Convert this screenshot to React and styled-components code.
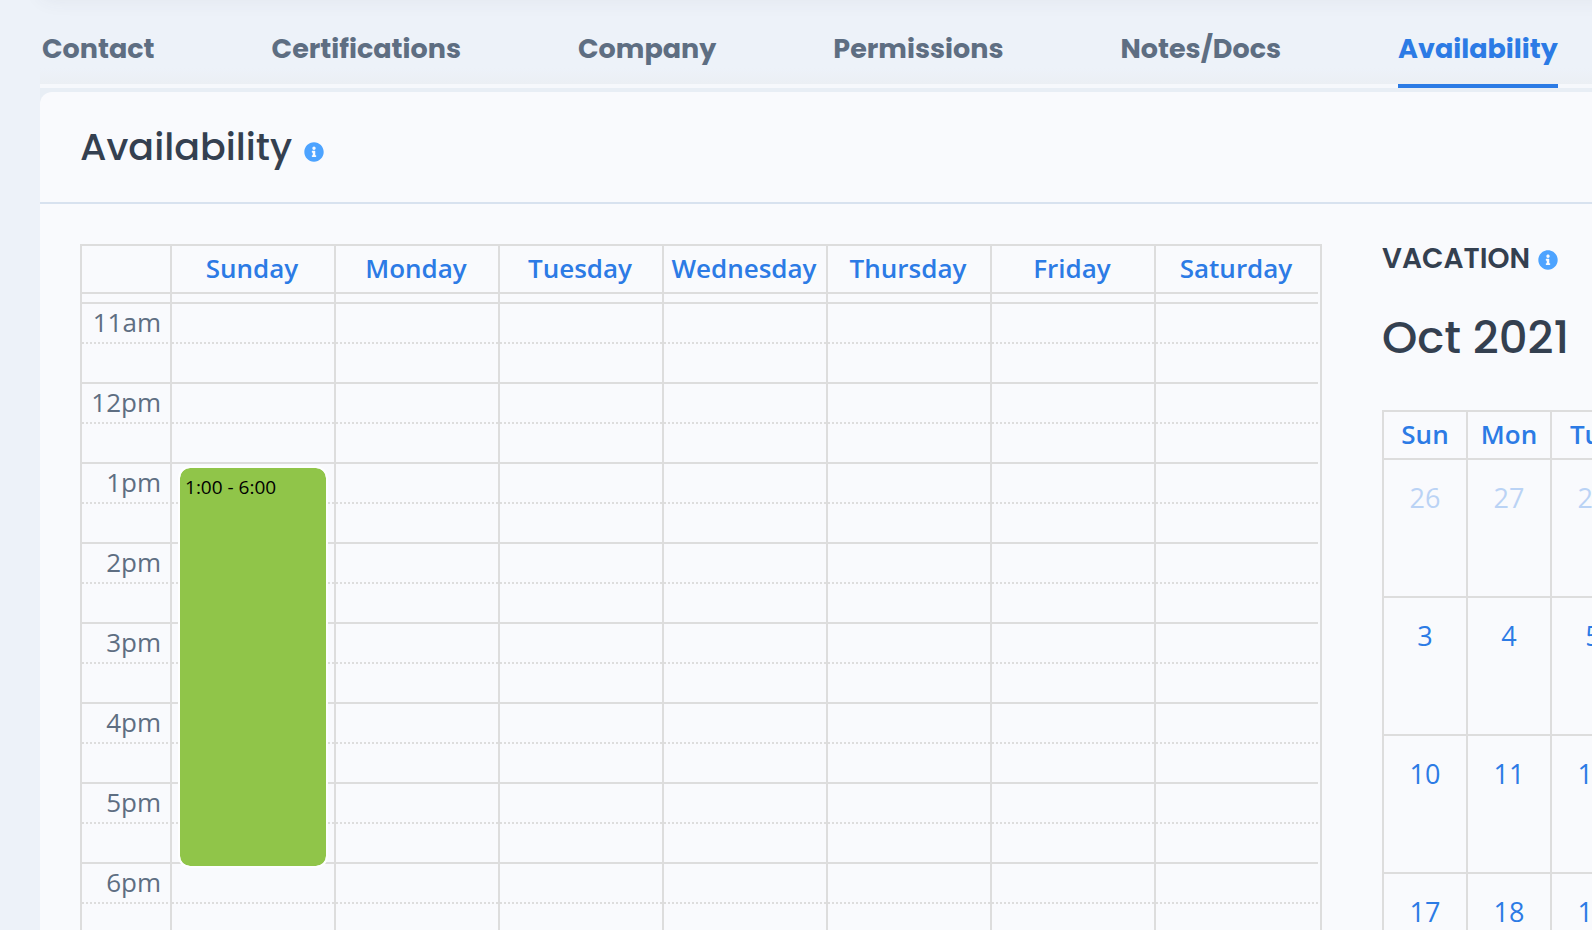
import React, { useState } from 'react';
import { FaInfoCircle } from 'react-icons/fa';
import styled, { createGlobalStyle } from 'styled-components';

const GlobalStyle = createGlobalStyle`
* {
  box-sizing: border-box;
}
body {
  margin: 0;
  background-color: #edf2f9;
  color: #5e6e82;
  font-family: "Open Sans", "Noto Sans", sans-serif;
}
`;

const Page = styled.div`
height: 100vh;
overflow: hidden;
`;

const Content = styled.div`
min-width: max-content;
padding: 0 40px;
`;

// bottom edge of the profile card, scrolled out of view
const ProfileCard = styled.div`
height: 40px;
margin-top: -44px;
margin-bottom: 4px;
border-radius: 12px;
background-color: #f9fafd;
box-shadow: 0 4px 20px rgba(65, 69, 88, 0.07);
`;

const Tabs = styled.nav`
display: flex;
gap: 117px;
padding: 28px 2px 0;
border-bottom: 4px solid #f6f8fc;
background-image: linear-gradient(to top, #ebeff4, transparent 16px);
`;

const Tab = styled.a`
padding-bottom: 14px;
margin-bottom: -4px;
border-bottom: 4px solid ${(props) => (props.$active ? '#2c7be5' : 'transparent')};
color: ${(props) => (props.$active ? '#2c7be5' : '#5e6e82')};
font-family: "Poppins", "Inter", sans-serif;
font-size: 27px;
font-weight: 700;
line-height: 42px;
text-decoration: none;
`;

const CardWrap = styled.div`
padding-top: 4px;
background-color: #e8eef5;
`;

const Card = styled.section`
border-radius: 12px;
background-color: #f9fafd;
`;

const CardHeader = styled.header`
display: flex;
align-items: center;
height: 112px;
padding: 0 40px;
border-bottom: 2px solid #d8e2ef;
`;

const CardBody = styled.div`
display: flex;
align-items: flex-start;
gap: 60px;
padding: 40px;
`;

const Heading = styled.h2`
margin: 0;
color: #344050;
font-family: "Poppins", "Inter", sans-serif;
font-weight: 500;
`;

const Title = styled(Heading)`
font-size: 38px;
line-height: 54px;
`;

const SideTitle = styled(Heading)`
margin-bottom: 32px;
font-size: 28px;
font-weight: 600;
line-height: 30px;
text-transform: uppercase;
`;

const Month = styled(Heading)`
margin-bottom: 40px;
font-size: 45px;
line-height: 64px;
`;

const InfoButton = styled.button`
display: inline-flex;
margin: 0 0 0 ${(props) => props.$gap}px;
padding: 0;
border: none;
background: none;
color: #4da3ff;
font-size: 20px;
vertical-align: -2px;
cursor: pointer;
`;

const WeekFrame = styled.div`
padding-right: 2px;
border: 2px solid #ddd;
`;

const Table = styled.table`
table-layout: fixed;
border-collapse: separate;
border-spacing: 0;
`;

const WeekTable = styled(Table)`
width: 1236px;
`;

const MonthTable = styled(Table)`
width: 590px;
border-top: 2px solid #ddd;
border-left: 2px solid #ddd;
`;

const DayHead = styled.th`
width: ${(props) => props.$width};
height: 48px;
padding: 0 0 2px;
border-right: 2px solid #ddd;
border-bottom: 2px solid #ddd;
color: #2c7be5;
font-size: 26px;
font-weight: 600;
line-height: 44px;
${WeekTable} & {
  padding-right: 2px;
}
${WeekTable} &:last-child {
  border-right: none;
}
`;

const Slot = styled.td`
position: relative;
height: ${(props) => (props.$clipped ? 10 : 40)}px;
padding: 0 9px 0 0;
border-right: 2px solid #ddd;
border-bottom: ${(props) => (props.$half ? 'none' : '2px solid #ddd')};
background: ${(props) => (props.$half
    ? 'repeating-linear-gradient(to right, #ddd 0 2px, transparent 2px 4px) bottom / 100% 2px no-repeat'
    : 'none')};
vertical-align: top;
&:last-child {
  border-right: none;
}
`;

const HourSlot = styled(Slot)`
font-size: 26px;
font-weight: 400;
line-height: 36px;
text-align: right;
`;

const Event = styled.div`
position: absolute;
z-index: 1;
top: 2px;
left: 6px;
right: 6px;
padding: 6px 5px;
border: 2px solid #fdfefe;
border-radius: 12px;
background-color: #90c549;
background-clip: padding-box;
color: #000;
font-size: 19px;
line-height: 26px;
`;

const DayCell = styled.td`
height: 138px;
padding: 20px 0 0;
border-right: 2px solid #ddd;
border-bottom: 2px solid #ddd;
color: #2c7be5;
font-size: 27px;
line-height: 36px;
text-align: center;
vertical-align: top;
`;

const DayNumber = styled.span`
opacity: ${(props) => (props.$muted ? 0.3 : 1)};
`;

const tabs = ['Contact', 'Certifications', 'Company', 'Permissions', 'Notes/Docs', 'Availability'];
const days = ['Sunday', 'Monday', 'Tuesday', 'Wednesday', 'Thursday', 'Friday', 'Saturday'];
const hours = [11, 12, 13, 14, 15, 16, 17, 18];
const events = [{ day: 'Sunday', start: 13, end: 18 }];

const to12 = (hour) => (hour > 12 ? hour - 12 : hour);
const hourLabel = (hour) => to12(hour) + (hour < 12 ? 'am' : 'pm');

// weeks shown for a month, starting on sunday
const getWeeks = (year, month) => {
  const first = new Date(year, month, 1).getDay();
  const weeks = [];
  for (let w = 0; w < 6; w++) {
    weeks.push(days.map((_, d) => new Date(year, month, 1 - first + w * 7 + d)));
  }
  return weeks;
};

const WeekCalendar = () => (
  <WeekFrame>
    <WeekTable>
      <thead>
        <tr>
          <DayHead as="td" $width="90px" />
          {days.map((day) => (
            <DayHead key={day} scope="col" $width={day === 'Saturday' ? '162px' : '164px'}>{day}</DayHead>
          ))}
        </tr>
      </thead>
      <tbody>
        <tr>
          <Slot $clipped />
          {days.map((day) => <Slot key={day} $clipped />)}
        </tr>
        {hours.map((hour) => (
          <React.Fragment key={hour}>
            <tr>
              <HourSlot as="th" scope="row" $half>{hourLabel(hour)}</HourSlot>
              {days.map((day) => {
                const event = events.find((e) => e.day === day && e.start === hour);
                return (
                  <Slot key={day} $half>
                    {event && (
                      <Event style={{ height: (event.end - event.start) * 80 + 2 }}>
                        {to12(event.start)}:00 - {to12(event.end)}:00
                      </Event>
                    )}
                  </Slot>
                );
              })}
            </tr>
            <tr>
              <Slot />
              {days.map((day) => <Slot key={day} />)}
            </tr>
          </React.Fragment>
        ))}
      </tbody>
    </WeekTable>
  </WeekFrame>
);

const MonthCalendar = ({ year, month }) => (
  <MonthTable>
    <thead>
      <tr>
        {days.map((day) => <DayHead key={day} scope="col" $width="84px">{day.slice(0, 3)}</DayHead>)}
      </tr>
    </thead>
    <tbody>
      {getWeeks(year, month).map((week, i) => (
        <tr key={i}>
          {week.map((date) => (
            <DayCell key={date.getTime()}>
              <DayNumber $muted={date.getMonth() !== month}>{date.getDate()}</DayNumber>
            </DayCell>
          ))}
        </tr>
      ))}
    </tbody>
  </MonthTable>
);

const App = () => {
  const [active, setActive] = useState('Availability');

  return (
    <Page>
      <GlobalStyle />
      <Content>
        <ProfileCard />
        <Tabs>
          {tabs.map((tab) => (
            <Tab key={tab} href="#" $active={tab === active} onClick={() => setActive(tab)}>{tab}</Tab>
          ))}
        </Tabs>
        <CardWrap>
          <Card>
            <CardHeader>
              <Title>
                Availability
                <InfoButton type="button" aria-label="Info" $gap={12}><FaInfoCircle /></InfoButton>
              </Title>
            </CardHeader>
            <CardBody>
              <WeekCalendar />
              <div>
                <SideTitle>
                  Vacation
                  <InfoButton type="button" aria-label="Info" $gap={8}><FaInfoCircle /></InfoButton>
                </SideTitle>
                <Month>Oct 2021</Month>
                <MonthCalendar year={2021} month={9} />
              </div>
            </CardBody>
          </Card>
        </CardWrap>
      </Content>
    </Page>
  );
};
export default App;
